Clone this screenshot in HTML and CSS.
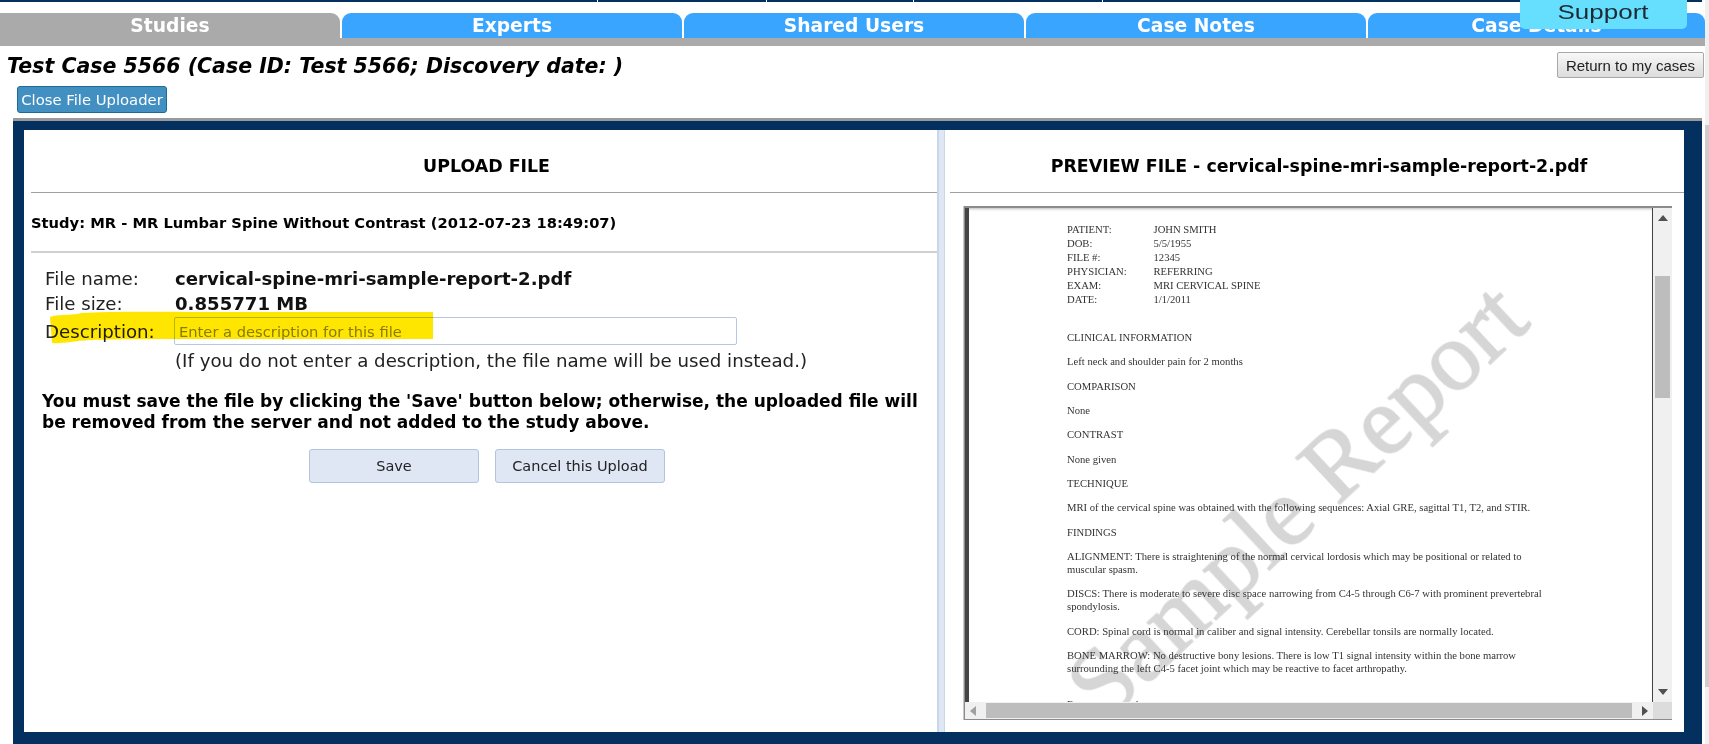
FILE: index.html
```html
<!DOCTYPE html>
<html lang="en">
<head>
<meta charset="utf-8">
<title>Test Case 5566</title>
<link rel="stylesheet" href="styles.css">
</head>
<body>
<div class="page">
  <div class="topbar">
    <span class="seg seg-a"></span><span class="seg seg-b"></span><span class="seg seg-c"></span><span class="seg seg-d"></span><span class="seg seg-e"></span>
  </div>
  <a class="support"><span class="support-text">Support</span></a>
  <nav class="tabs">
    <a class="tab tab-active">Studies</a>
    <a class="tab">Experts</a>
    <a class="tab">Shared Users</a>
    <a class="tab">Case Notes</a>
    <a class="tab tab-last">Case Details</a>
  </nav>
  <div class="tabband"></div>
  <header class="casehead">
    <h1 class="casetitle">Test Case 5566 (Case ID: Test 5566; Discovery date: )</h1>
    <button class="btn-return">Return to my cases</button>
  </header>
  <button class="btn-close">Close File Uploader</button>
  <main class="panel">
    <div class="inner">
      <section class="col-left">
        <h2 class="col-title">UPLOAD FILE</h2>
        <hr class="rule">
        <div class="study">Study: MR - MR Lumbar Spine Without Contrast (2012-07-23 18:49:07)</div>
        <hr class="rule rule-light">
        <div class="form">
          <div class="row row-name"><span class="label">File name:</span><strong class="value">cervical-spine-mri-sample-report-2.pdf</strong></div>
          <div class="row row-size"><span class="label">File size:</span><strong class="value">0.855771 MB</strong></div>
          <div class="row row-desc"><span class="label">Description:</span><input class="desc" type="text" placeholder="Enter a description for this file"></div>
          <div class="row row-note"><span class="label"></span><span class="note">(If you do not enter a description, the file name will be used instead.)</span></div>
          <svg class="marker" width="390" height="36" viewBox="0 0 390 36"><path d="M0 6 C8 3 18 5 32 2 C60 0 120 1 180 1 L383 1 L383 28 L180 28 C120 28 70 28 40 29 C22 30 12 33 2 32 Z" fill="#ffe600"/></svg>
        </div>
        <p class="warning">You must save the file by clicking the 'Save' button below; otherwise, the uploaded file will be removed from the server and not added to the study above.</p>
        <div class="actions">
          <button class="btn-act">Save</button>
          <button class="btn-act">Cancel this Upload</button>
        </div>
      </section>
      <div class="divider"></div>
      <section class="col-right">
        <h2 class="col-title"><b>PREVIEW FILE - </b><span class="fname">cervical-spine-mri-sample-report-2.pdf</span></h2>
        <hr class="rule">
        <div class="viewer">
          <div class="viewport">
            <div class="watermark">Sample Report</div>
            <div class="doc">
              <div class="meta"><span>PATIENT:</span><span>JOHN SMITH</span><span>DOB:</span><span>5/5/1955</span><span>FILE #:</span><span>12345</span><span>PHYSICIAN:</span><span>REFERRING</span><span>EXAM:</span><span>MRI CERVICAL SPINE</span><span>DATE:</span><span>1/1/2011</span></div>
              <p class="first">CLINICAL INFORMATION</p>
              <p>Left neck and shoulder pain for 2 months</p>
              <p>COMPARISON</p>
              <p>None</p>
              <p>CONTRAST</p>
              <p>None given</p>
              <p>TECHNIQUE</p>
              <p>MRI of the cervical spine was obtained with the following sequences: Axial GRE, sagittal T1, T2, and STIR.</p>
              <p>FINDINGS</p>
              <p>ALIGNMENT: There is straightening of the normal cervical lordosis which may be positional or related to<br>muscular spasm.</p>
              <p>DISCS: There is moderate to severe disc space narrowing from C4-5 through C6-7 with prominent prevertebral<br>spondylosis.</p>
              <p>CORD: Spinal cord is normal in caliber and signal intensity. Cerebellar tonsils are normally located.</p>
              <p>BONE MARROW: No destructive bony lesions. There is low T1 signal intensity within the bone marrow<br>surrounding the left C4-5 facet joint which may be reactive to facet arthropathy.</p>
              <p class="last">Report approved on</p>
            </div>
          </div>
          <div class="vbar">
            <svg class="arrow" width="10" height="6" viewBox="0 0 10 6"><path d="M5 0 L10 6 H0 Z" fill="#505050"/></svg>
            <div class="vtrack"><div class="vthumb"></div></div>
            <svg class="arrow" width="10" height="6" viewBox="0 0 10 6"><path d="M0 0 H10 L5 6 Z" fill="#505050"/></svg>
          </div>
          <div class="hbar">
            <svg class="arrow" width="6" height="10" viewBox="0 0 6 10"><path d="M6 0 V10 L0 5 Z" fill="#a0a0a0"/></svg>
            <div class="hthumb"></div>
            <svg class="arrow" width="6" height="10" viewBox="0 0 6 10"><path d="M0 0 L6 5 L0 10 Z" fill="#505050"/></svg>
          </div>
          <div class="corner"></div>
        </div>
      </section>
    </div>
  </main>
  <div class="pagebar"><div class="pagethumb"></div></div>
</div>
</body>
</html>
```
FILE: styles.css
```css
* { box-sizing: border-box; }
html, body { margin: 0; padding: 0; height: 744px; overflow: hidden; background: #fff; }
body { font-family: "DejaVu Sans", Verdana, sans-serif; color: #000; }
.page { position: relative; width: 1709px; height: 744px; overflow: hidden; }

.topbar { display: flex; gap: 1px; width: 1702px; height: 2px; margin-bottom: 11px; }
.seg { display: block; height: 2px; background: #03305f; }
.seg-a { width: 597px; }
.seg-b { width: 168px; }
.seg-c { width: 146px; }
.seg-d { width: 188px; }
.seg-e { flex: 1; }

.support {
  position: absolute; top: 0; left: 1520px; width: 167px; height: 29px;
  background: #66dfff; border-radius: 0 0 5px 5px;
  font: 20px/24px "Liberation Sans", Arial, sans-serif;
  color: #1c2b33; text-align: center;
}
.support-text { display: inline-block; transform: scaleX(1.3); }

.tabs { display: flex; gap: 2px; width: 1705px; height: 25px; }
.tab {
  flex: 0 0 340px; height: 25px; background: #3aa5ff; border-radius: 9px 9px 0 0;
  color: #fff; font: bold 18.7px/26px "DejaVu Sans", sans-serif; text-align: center;
}
.tab-active { background: #aaaaaa; border-radius: 0 9px 0 0; }
.tab-last { flex: 1; }
.tabband { width: 1705px; height: 8px; background: #aaaaaa; }

.casehead { display: flex; justify-content: space-between; align-items: flex-start; width: 1704px; height: 40px; }
.casetitle {
  margin: 7px 0 0 7px; font: italic bold 20.5px/26px "DejaVu Sans", sans-serif; color: #000;
}
.btn-return {
  width: 147px; height: 26px; margin-top: 6px; padding: 0;
  font: 15px "Liberation Sans", Arial, sans-serif; color: #222;
  background: linear-gradient(#f8f8f8, #dcdcdc); border: 1px solid #a8a8a8; border-radius: 2px;
}
.btn-close {
  display: block; width: 150px; height: 27px; margin-left: 17px; padding: 0;
  background: #428fc2; border: 1px solid #1d6a95; border-radius: 3px; color: #fff;
  font: 14.8px "DejaVu Sans", sans-serif;
}

.panel {
  width: 1689px; height: 630px; margin: 5px 0 0 13px; padding: 9px 18px 0 11px;
  background: #03305f; border-top: 3px solid #9a9a9a;
}
.inner { display: flex; height: 602px; background: #fff; }
.col-left { width: 913px; }
.divider { width: 8px; background: #dfe7f5; border-left: 2px solid #c8d7ea; border-right: 1px solid #c8d7ea; }
.col-right { width: 739px; padding-left: 5px; }

.col-title {
  height: 62px; margin: 0; padding: 25px 0 0 12px; text-align: center;
  font: bold 17.4px/22px "DejaVu Sans", sans-serif;
}
.col-right .col-title { padding-left: 4px; }
.fname { font-weight: bold; }
.rule { height: 1px; margin: 0 0 0 7px; border: 0; background: #a0a0a0; }
.col-right .rule { margin-left: 0; }
.rule-light { height: 2px; background: #d0d0d0; }
.study { height: 58px; padding: 20px 0 0 7px; font: bold 14.7px/20px "DejaVu Sans", sans-serif; white-space: nowrap; }

.form { position: relative; padding: 13px 0 0 21px; }
.row { display: flex; align-items: center; font-size: 18.2px; color: #222; }
.row-name { height: 24px; }
.row-size { height: 26px; }
.row-desc { height: 28px; margin-top: 1px; }
.row-note { height: 30px; }
.label { flex: 0 0 130px; }
.value { font-size: 18.1px; color: #111; }
.desc {
  width: 563px; height: 28px; margin-left: -1px; padding: 0 4px; background: #fff; border: 1px solid #b4c9e0; border-radius: 2px;
  font: 14.7px "DejaVu Sans", sans-serif;
}
.desc::placeholder { color: #8a8a8a; opacity: 1; }
.note { font-size: 18.2px; color: #222; white-space: nowrap; }
.marker { position: absolute; left: 26px; top: 58px; mix-blend-mode: multiply; }

.warning { margin: 16px 0 0 18px; width: 885px; font: bold 17px/21px "DejaVu Sans", sans-serif; }
.actions { display: flex; gap: 16px; margin: 16px 0 0 285px; }
.btn-act {
  width: 170px; height: 34px; padding: 0; background: #dfe7f5; border: 1px solid #b0c6df; border-radius: 3px;
  font: 14.5px "DejaVu Sans", sans-serif; color: #222;
}

.viewer {
  display: grid; grid-template-columns: 688px 19px; grid-template-rows: 494px 17px;
  width: 708px; height: 514px; margin: 13px 0 0 14px; background: #fff;
  border: 1px solid #8c8c8c; border-top: 2px solid #8c8c8c; border-bottom-width: 2px;
  box-shadow: -1px 0 0 #c8c8c8;
}
.viewport {
  position: relative; overflow: hidden; background: #fff;
  border-left: 4px solid #444; border-right: 1px solid #444;
  box-shadow: inset 0 3px 3px -2px #bbb;
}
.watermark {
  position: absolute; left: -23px; top: 242px; width: 700px; text-align: center;
  font: 98px/100px "Liberation Serif", serif; color: #d6d6d6; white-space: nowrap;
  -webkit-text-stroke: 1.5px #d6d6d6; filter: blur(0.6px);
  transform: rotate(-43deg);
}
.doc {
  position: relative; padding: 14.5px 0 0 98px;
  font: 10.65px/13px "Liberation Serif", serif; color: #333; white-space: nowrap; filter: blur(0.3px);
}
.meta { display: grid; grid-template-columns: 86.5px 1fr; line-height: 14px; }
.meta span { height: 14.1px; }
.doc p { margin: 11.33px 0 0; }
.doc p.first { margin-top: 24px; }
.doc p.last { margin-top: 23px; }

.vbar { display: flex; flex-direction: column; align-items: center; justify-content: space-between; padding: 7px 0 7px; background: #f0f0f0; }
.vtrack { flex: 1; width: 100%; padding: 55px 2px 0; }
.vthumb { height: 122px; background: #bdbdbd; }
.hbar { display: flex; align-items: center; justify-content: space-between; padding: 0 5px 0 5px; background: #f0f0f0; }
.hthumb { width: 646px; height: 15px; background: #bdbdbd; }
.corner { background: #dcdcdc; }

.pagebar { position: absolute; left: 1705px; top: 0; bottom: 0; width: 4px; background: #f0f0f0; }
.pagethumb { margin-top: 125px; height: 562px; background: #cdcdcd; }
```
